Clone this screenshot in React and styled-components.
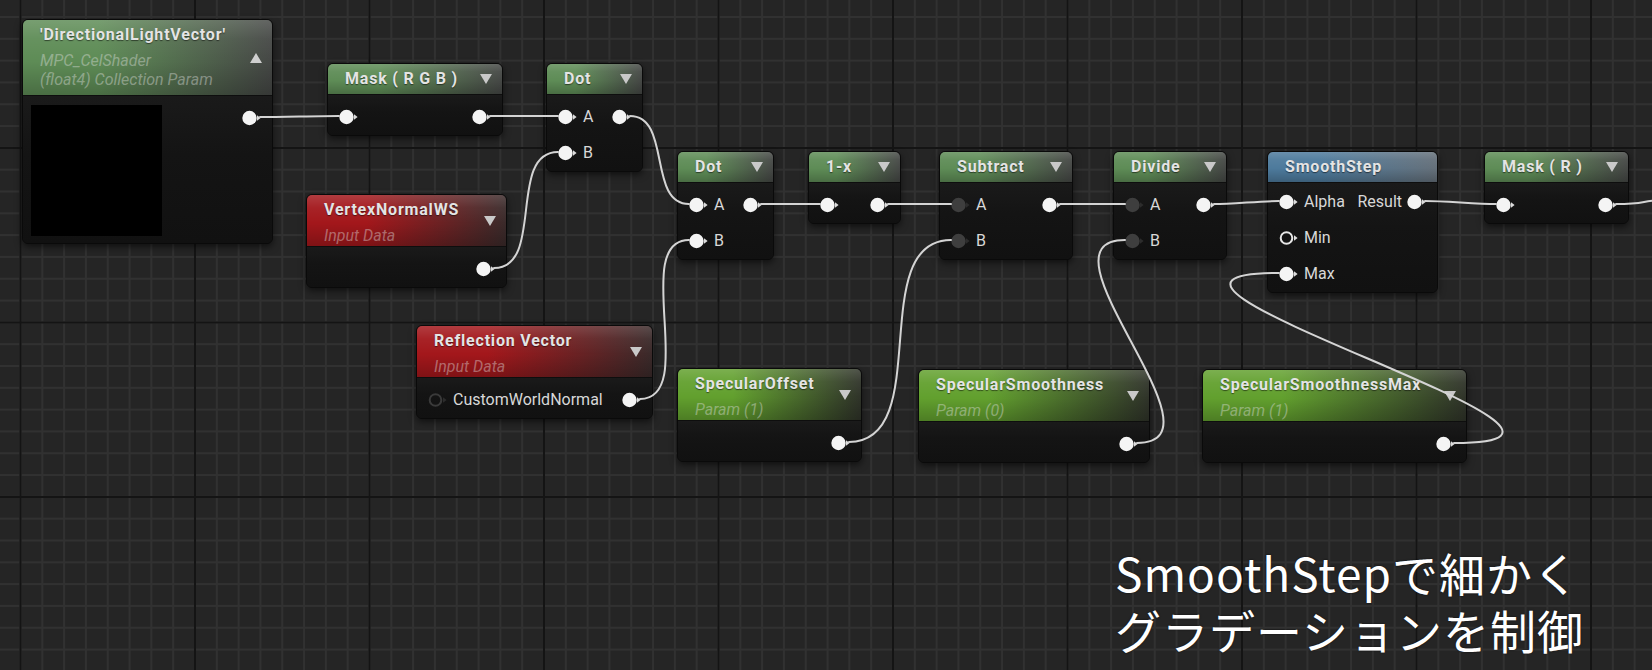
import React from 'react'
import styled, { createGlobalStyle, css } from 'styled-components'

const GlobalStyle = createGlobalStyle`
  html, body {
    margin: 0;
    padding: 0;
    background: #252525;
  }
  body {
    font-family: Roboto, "Liberation Sans", sans-serif;
  }
`

const ROW = 36

// header colours: left colour fades into the right colour
const tones = {
  material: ['#5e8c56', '#454745'],
  param: ['#62a02e', '#2f3329'],
  input: ['#a3171b', '#3a2a2a'],
  func: ['#4d7a9c', '#65707a'],
}

const NODES = [
  { id: 'dlv', x: 22, y: 19, w: 251, head: 76, tone: 'material', title: "'DirectionalLightVector'", subs: ['MPC_CelShader', '(float4) Collection Param'], caret: 'up', preview: true, rows: [{ out: 'on' }] },
  { id: 'maskRGB', x: 327, y: 63, w: 176, head: 31, tone: 'material', title: 'Mask ( R G B )', caret: 'down', rows: [{ in: 'on', out: 'on' }] },
  { id: 'dot1', x: 546, y: 63, w: 97, head: 31, tone: 'material', title: 'Dot', caret: 'down', rows: [{ in: 'on', inLabel: 'A', out: 'on' }, { in: 'on', inLabel: 'B' }] },
  { id: 'vnws', x: 306, y: 194, w: 201, head: 52, tone: 'input', title: 'VertexNormalWS', subs: ['Input Data'], caret: 'down', rows: [{ out: 'on' }] },
  { id: 'refl', x: 416, y: 325, w: 237, head: 52, tone: 'input', title: 'Reflection Vector', subs: ['Input Data'], caret: 'down', rows: [{ in: 'hollowDim', inLabel: 'CustomWorldNormal', out: 'on' }] },
  { id: 'dot2', x: 677, y: 151, w: 97, head: 31, tone: 'material', title: 'Dot', caret: 'down', rows: [{ in: 'on', inLabel: 'A', out: 'on' }, { in: 'on', inLabel: 'B' }] },
  { id: 'oneMinus', x: 808, y: 151, w: 93, head: 31, tone: 'material', title: '1-x', caret: 'down', rows: [{ in: 'on', out: 'on' }] },
  { id: 'sub', x: 939, y: 151, w: 134, head: 31, tone: 'material', title: 'Subtract', caret: 'down', rows: [{ in: 'dim', inLabel: 'A', out: 'on' }, { in: 'dim', inLabel: 'B' }] },
  { id: 'div', x: 1113, y: 151, w: 114, head: 31, tone: 'material', title: 'Divide', caret: 'down', rows: [{ in: 'dim', inLabel: 'A', out: 'on' }, { in: 'dim', inLabel: 'B' }] },
  { id: 'smooth', x: 1267, y: 151, w: 171, head: 31, pad: 1, tone: 'func', title: 'SmoothStep', rows: [{ in: 'on', inLabel: 'Alpha', out: 'on', outLabel: 'Result' }, { in: 'hollow', inLabel: 'Min' }, { in: 'on', inLabel: 'Max' }] },
  { id: 'maskR', x: 1484, y: 151, w: 145, head: 31, tone: 'material', title: 'Mask ( R )', caret: 'down', rows: [{ in: 'on', out: 'on' }] },
  { id: 'specOff', x: 677, y: 368, w: 185, head: 52, tone: 'param', title: 'SpecularOffset', subs: ['Param (1)'], caret: 'down', rows: [{ out: 'on' }] },
  { id: 'specSm', x: 918, y: 369, w: 232, head: 52, tone: 'param', title: 'SpecularSmoothness', subs: ['Param (0)'], caret: 'down', rows: [{ out: 'on' }] },
  { id: 'specMax', x: 1202, y: 369, w: 265, head: 52, tone: 'param', title: 'SpecularSmoothnessMax', subs: ['Param (1)'], caret: 'down', rows: [{ out: 'on' }] },
]

const LINKS = [
  ['dlv', 0, 'maskRGB', 0],
  ['maskRGB', 0, 'dot1', 0],
  ['vnws', 0, 'dot1', 1],
  ['dot1', 0, 'dot2', 0],
  ['refl', 0, 'dot2', 1],
  ['dot2', 0, 'oneMinus', 0],
  ['oneMinus', 0, 'sub', 0],
  ['specOff', 0, 'sub', 1],
  ['sub', 0, 'div', 0],
  ['specSm', 0, 'div', 1],
  ['div', 0, 'smooth', 0],
  ['specMax', 0, 'smooth', 2],
  ['smooth', 0, 'maskR', 0],
]

const byId = Object.fromEntries(NODES.map(n => [n.id, n]))

const rowY = (n, i) => n.y + n.head + (n.pad ?? 4) + ROW / 2 + i * ROW
const outPoint = (n, i) => [n.x + n.w - 23 + 10, rowY(n, i)]
const inPoint = (n, i) => [n.x + 19 - 7, rowY(n, i)]

// tangent rule taken from the graph editor: backward wires get a longer tangent
const wirePath = ([x0, y0], [x1, y1]) => {
  const dx = x1 - x0
  const dy = Math.abs(y1 - y0)
  const t = dx >= 0 ? Math.abs(dx) + dy : 3 * Math.abs(dx) + 1.5 * dy
  const d = (t / 3) * 0.85
  return `M${x0},${y0} C${x0 + d},${y0} ${x1 - d},${y1} ${x1},${y1}`
}

const Pin = ({ state }) => {
  const on = state === 'on'
  const hollow = state === 'hollow' || state === 'hollowDim'
  const ring = state === 'hollow' ? '#e6e6e6' : '#3a3a3a'
  const fill = on ? '#f4f4f4' : '#3e3e3e'
  const arrow = on || state === 'hollow' ? '#dcdcdc' : '#2c2c2c'
  return (
    <PinSvg width="20" height="16" viewBox="0 0 20 16">
      {hollow ? (
        <circle cx="7.5" cy="8" r="5.8" fill="none" stroke={ring} strokeWidth="2" />
      ) : (
        <circle cx="7.5" cy="8" r="7.2" fill={fill} />
      )}
      <path d="M15 5.2 L18.6 8 L15 10.8 Z" fill={arrow} />
    </PinSvg>
  )
}

const GraphNode = ({ node }) => {
  const [c1, c2] = tones[node.tone]
  const multi = !!node.subs
  const rows = (
    <Rows $pad={node.pad ?? 4}>
      {node.rows.map((r, i) => (
        <PinRow key={i}>
          <PinSide>
            {r.in && <Pin state={r.in} />}
            {r.inLabel && <PinLabel>{r.inLabel}</PinLabel>}
          </PinSide>
          <PinSide>
            {r.outLabel && <PinLabel>{r.outLabel}</PinLabel>}
            {r.out && <Pin state={r.out} />}
          </PinSide>
        </PinRow>
      ))}
    </Rows>
  )
  return (
    <NodeBox $x={node.x} $y={node.y} $w={node.w}>
      <Header $h={node.head} $c1={c1} $c2={c2}>
        <TitleBlock $multi={multi}>
          <Title>{node.title}</Title>
          {node.subs && node.subs.map((s, i) => (
            <Sub key={i} $first={i === 0}>{s}</Sub>
          ))}
        </TitleBlock>
        {node.caret && <Caret $up={node.caret === 'up'} />}
      </Header>
      <Body>
        {node.preview ? (
          <PreviewBody>
            <Preview />
            {rows}
          </PreviewBody>
        ) : rows}
      </Body>
    </NodeBox>
  )
}

const App = () => {
  const tail = outPoint(byId.maskR, 0)
  return (
    <>
      <GlobalStyle />
      <Canvas>
        {NODES.map(n => <GraphNode key={n.id} node={n} />)}
        <Wires width="1652" height="670" viewBox="0 0 1652 670">
          {LINKS.map(([a, ai, b, bi], i) => (
            <path key={i} d={wirePath(outPoint(byId[a], ai), inPoint(byId[b], bi))} />
          ))}
          <path d={`M${tail[0]},${tail[1]} C${tail[0] + 30},${tail[1]} 1640,${tail[1] - 3} 1660,${tail[1] - 4}`} />
        </Wires>
        <Caption>
          <CaptionLine>SmoothStepで細かく</CaptionLine>
          <CaptionLine>グラデーションを制御</CaptionLine>
        </Caption>
      </Canvas>
    </>
  )
}

export default App

const Canvas = styled.div`
  position: relative;
  width: 1652px;
  height: 670px;
  overflow: hidden;
  background-color: #252525;
  background-image:
    linear-gradient(to right, #141414 0, #141414 1.5px, transparent 1.5px),
    linear-gradient(to bottom, #141414 0, #141414 1.5px, transparent 1.5px),
    linear-gradient(to right, #313131 0, #313131 2px, transparent 2px),
    linear-gradient(to bottom, #313131 0, #313131 2px, transparent 2px);
  background-size: 174.5px 100%, 100% 174.5px, 21.8125px 100%, 100% 21.8125px;
  background-position: 19.5px 0, 0 147px, 19.5px 0, 0 16px;
`

const Wires = styled.svg`
  position: absolute;
  left: 0;
  top: 0;
  pointer-events: none;
  fill: none;

  & path {
    stroke: #d4d4d4;
    stroke-width: 2;
    fill: none;
    stroke-linecap: round;
  }
`

const NodeBox = styled.div`
  position: absolute;
  left: ${p => p.$x}px;
  top: ${p => p.$y}px;
  width: ${p => p.$w}px;
  box-sizing: border-box;
  display: flex;
  flex-direction: column;
  border: 1px solid #0a0a0a;
  border-radius: 6px;
  overflow: hidden;
  background: #131313;
  box-shadow: 0 3px 7px rgba(0, 0, 0, 0.55);
`

const Header = styled.div`
  height: ${p => p.$h}px;
  box-sizing: border-box;
  display: flex;
  align-items: center;
  justify-content: space-between;
  padding: 0 10px 0 17px;
  border-bottom: 1px solid #0e0e0e;
  background:
    linear-gradient(to bottom, rgba(255, 255, 255, 0.16) 0, rgba(255, 255, 255, 0.05) 25%, rgba(0, 0, 0, 0) 55%, rgba(0, 0, 0, 0.22) 100%),
    linear-gradient(to right, ${p => p.$c1} 0%, ${p => p.$c1} 30%, ${p => p.$c2} 100%);
`

const TitleBlock = styled.div`
  display: flex;
  flex-direction: column;
  min-width: 0;
  ${p => p.$multi && css`
    align-self: flex-start;
    padding-top: 5px;
  `}
`

const Title = styled.div`
  font-size: 16px;
  line-height: 20px;
  font-weight: 700;
  letter-spacing: 0.8px;
  color: #e4e4e4;
  white-space: nowrap;
  text-shadow: 0 1px 1px rgba(0, 0, 0, 0.5);
`

const Sub = styled.div`
  font-size: 16px;
  line-height: 19px;
  font-style: italic;
  color: rgba(225, 225, 225, 0.42);
  white-space: nowrap;
  margin-top: ${p => (p.$first ? 6 : 0)}px;
`

const Caret = styled.span`
  flex: none;
  width: 0;
  height: 0;
  border-left: 6.5px solid transparent;
  border-right: 6.5px solid transparent;
  ${p => p.$up
    ? css`border-bottom: 10px solid #cfcfcf;`
    : css`border-top: 10px solid #c9c9c9;`}
`

const Body = styled.div`
  background: linear-gradient(to bottom, #1a1a1a 0, #141414 40%, #111111 100%);
`

const PreviewBody = styled.div`
  display: flex;
  align-items: flex-start;
`

const Preview = styled.div`
  flex: none;
  width: 131px;
  height: 131px;
  margin: 9px 0 7px 8px;
  background: #000;
`

const Rows = styled.div`
  flex: 1;
  display: flex;
  flex-direction: column;
  padding-top: ${p => p.$pad}px;
`

const PinRow = styled.div`
  height: ${ROW}px;
  display: flex;
  align-items: center;
  justify-content: space-between;
  padding: 0 10px 0 11px;
`

const PinSide = styled.div`
  display: flex;
  align-items: center;
  gap: 5px;
`

const PinSvg = styled.svg`
  display: block;
  flex: none;
`

const PinLabel = styled.span`
  font-size: 16px;
  line-height: 20px;
  color: #d8d8d8;
  white-space: nowrap;
`

const Caption = styled.div`
  position: absolute;
  left: 1115px;
  top: 544px;
  display: flex;
  flex-direction: column;
  font-family: "Noto Sans CJK JP", "Noto Sans", sans-serif;
  font-size: 46px;
  letter-spacing: 1px;
  color: #ffffff;
  text-shadow: 0 0 2px rgba(0, 0, 0, 0.7);
  white-space: nowrap;
`

const CaptionLine = styled.div`
  height: 57px;
  line-height: 57px;
`
